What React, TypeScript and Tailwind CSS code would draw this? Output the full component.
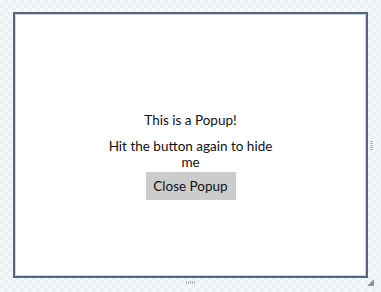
import React from "react";

export default function App() {
  return (
    <div className="w-[381px] h-[292px] bg-[#f5f7f9] bg-[linear-gradient(45deg,#eef1f4_25%,transparent_25%,transparent_75%,#eef1f4_75%),linear-gradient(45deg,#eef1f4_25%,transparent_25%,transparent_75%,#eef1f4_75%)] bg-[length:8px_8px] bg-[position:0_0,4px_4px] relative pt-[12px] pl-[13px] font-['Lato',sans-serif] text-[#111]">
      <div className="w-[355px] h-[266px] border-[2px] border-[#55657f] bg-white shadow-[inset_0_0_0_1px_#c5d5ea] flex flex-col items-center pt-[97px]">
        <div className="text-[13.5px] leading-[18px]">This is a Popup!</div>
        <div className="mt-[9px] w-[168px] text-center text-[13.5px] leading-[16px]">
          Hit the button again to hide me
        </div>
        <button className="mt-[2px] w-[90px] h-[28px] bg-[#cccccc] text-[13.5px] leading-[18px]">
          Close Popup
        </button>
      </div>
      <div className="absolute left-[370px] top-[141px] w-[3px] h-[9px] bg-[repeating-linear-gradient(180deg,#a9b4c4_0_1px,transparent_1px_2px)]" />
      <div className="absolute left-[186px] top-[281px] w-[9px] h-[3px] bg-[repeating-linear-gradient(90deg,#a9b4c4_0_1px,transparent_1px_2px)]" />
      <svg className="absolute left-[366px] top-[278px]" width="9" height="9" viewBox="0 0 9 9">
        <path d="M8 1 L8 8 L1 8 Z" fill="#8a95a6" />
      </svg>
    </div>
  );
}
